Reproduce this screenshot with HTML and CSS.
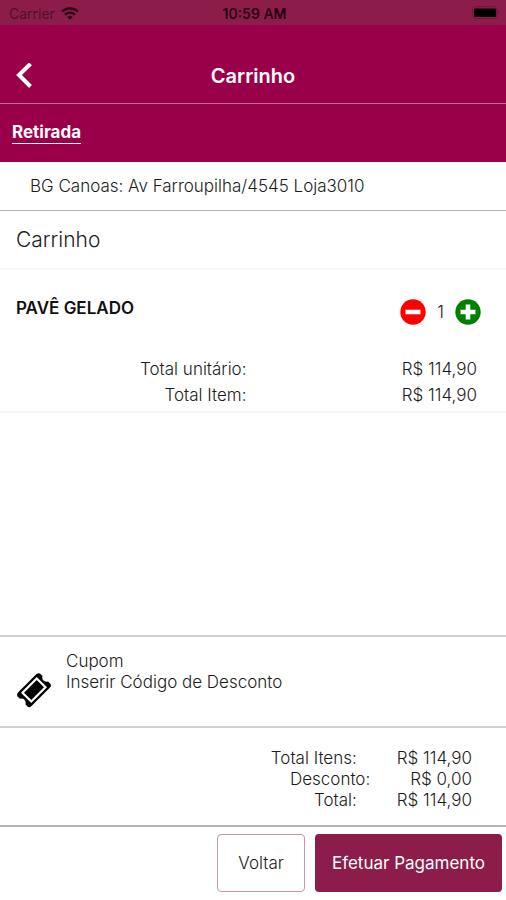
FILE: index.html
```html
<!DOCTYPE html>
<html lang="pt-BR">
<head>
  <meta charset="utf-8">
  <meta name="viewport" content="width=device-width, initial-scale=1">
  <title>Carrinho</title>
  <link rel="stylesheet" href="styles.css">
</head>
<body>
  <div class="status">
    <div class="carrier">
      <span>Carrier</span>
      <svg class="wifi" viewBox="0 0 18 13" aria-hidden="true">
        <g fill="none" stroke="currentColor" stroke-width="2.2">
          <path d="M1 4.6a11.4 11.4 0 0 1 16 0"/>
          <path d="M4 7.7a7.2 7.2 0 0 1 10 0"/>
        </g>
        <path fill="currentColor" d="M9 12.8 6.3 10a3.8 3.8 0 0 1 5.4 0z"/>
      </svg>
    </div>
    <span class="clock">10:59 AM</span>
    <svg class="battery" viewBox="0 0 28 14" aria-hidden="true">
      <rect x=".7" y=".7" width="24" height="12" rx="3" fill="none" stroke="#6d1639" stroke-width="1"/>
      <rect x="2" y="2.5" width="22" height="8.5" rx="1" fill="#000"/>
      <path d="M26 4.500q2 2.200 0 4.400z" fill="#6d1639"/>
    </svg>
  </div>

  <header class="header">
    <button class="back" type="button" aria-label="Voltar à tela anterior">
      <svg viewBox="0 0 16 26" aria-hidden="true"><path d="M14.500 .8 3 12l11.500 11.500" fill="none" stroke="#fff" stroke-width="4"/></svg>
    </button>
    <h1>Carrinho</h1>
  </header>

  <nav class="tabs"><a href="#retirada">Retirada</a></nav>

  <p class="address" id="retirada">BG Canoas: Av Farroupilha/4545 Loja3010</p>

  <main class="cart">
    <h2>Carrinho</h2>
    <article class="item">
      <div class="item-head">
        <h3>PAVÊ GELADO</h3>
        <div class="quantity">
          <button type="button" aria-label="Diminuir">
            <svg viewBox="0 0 26 26" aria-hidden="true"><circle cx="13" cy="13" r="12.7" fill="#fe0000"/><path d="M5.500 13h15" stroke="#fff" stroke-width="4.6"/></svg>
          </button>
          <span>1</span>
          <button type="button" aria-label="Aumentar">
            <svg viewBox="0 0 26 26" aria-hidden="true"><circle cx="13" cy="13" r="12.7" fill="#008000"/><path d="M5.500 13h15M13 5.500v15" stroke="#fff" stroke-width="4.6"/></svg>
          </button>
        </div>
      </div>
      <dl class="prices">
        <dt>Total unitário:</dt><dd>R$ 114,90</dd>
        <dt>Total Item:</dt><dd>R$ 114,90</dd>
      </dl>
    </article>
  </main>

  <a class="coupon" href="#cupom">
    <svg viewBox="0 0 36 36" aria-hidden="true">
      <path d="M20.500 2Q22.500 .3 24.500 2L26.500 4Q25.800 7 27.500 8.600 29.200 10.300 32 9.500L34.200 11.500Q35.800 13.500 34 15.500L15.500 34Q13.500 36.200 11.500 34.500L9.500 32.500Q10.200 29.500 8.500 27.700 6.700 26 4 26.800L1.800 24.800Q.2 22.500 2 20.500Z" fill="#000"/>
      <path d="M20.700 6.500 29.500 15.300 15.300 29.500 6.500 20.700Z" fill="#000" stroke="#fff" stroke-width="2.2"/>
    </svg>
    <span class="coupon-text"><span>Cupom</span><span>Inserir Código de Desconto</span></span>
  </a>

  <dl class="totals">
    <div><dt>Total Itens:</dt><dd>R$ 114,90</dd></div>
    <div><dt>Desconto:</dt><dd>R$ 0,00</dd></div>
    <div><dt>Total:</dt><dd>R$ 114,90</dd></div>
  </dl>

  <footer class="actions">
    <button class="secondary" type="button">Voltar</button>
    <button class="primary" type="button">Efetuar Pagamento</button>
  </footer>
</body>
</html>
```
FILE: styles.css
```css
* {
  box-sizing: border-box;
}

body {
  display: flex;
  flex-direction: column;
  min-height: 100vh;
  margin: 0;
  background: #fff;
  color: #1c1c1c;
  font: 300 17px/21px Inter, "Liberation Sans", sans-serif;
}

h1, h2, h3, p, dl, dd {
  margin: 0;
}

button {
  padding: 0;
  border: 0;
  background: none;
  color: inherit;
  font: inherit;
}

svg {
  display: block;
}

.status {
  display: grid;
  grid-template-columns: 1fr auto 1fr;
  align-items: center;
  height: 25px;
  padding: 1px 6px 0 9px;
  background: #8c1d4b;
  color: #26000f;
  font-size: 14px;
  font-weight: 400;
}

.carrier {
  display: flex;
  align-items: center;
  gap: 6px;
  color: #4e1029;
}

.wifi {
  width: 18px;
  height: 13px;
  color: #26000f;
}

.clock {
  font-weight: 600;
}

.battery {
  width: 28px;
  height: 14px;
  justify-self: end;
}

.header {
  display: grid;
  grid-template-columns: 1fr auto 1fr;
  align-items: center;
  padding: 36px 16px 12px;
  border-bottom: 1px solid #c46c92;
  background: #9a0049;
  color: #fff;
}

.back {
  width: 16px;
}

.back svg {
  width: 16px;
  height: 26px;
}

h1 {
  font-size: 20px;
  font-weight: 600;
  line-height: 30px;
}

.tabs {
  display: flex;
  padding: 18px 12px;
  background: #9a0049;
}

.tabs a {
  border-bottom: 1px solid #fff;
  color: #fff;
  font-weight: 700;
  text-decoration: none;
}

.address {
  padding: 14px 30px 13px;
  border-bottom: 1px solid #c3aab4;
}

.cart {
  flex: 1;
}

h2 {
  padding: 17px 16px 16px;
  border-bottom: 2px solid #f6f6f6;
  font-size: 21px;
  font-weight: 300;
  line-height: 24px;
}

.item {
  padding: 28px 25px 3px 16px;
  border-bottom: 2px solid #f4f4f4;
}

.item-head {
  display: flex;
  justify-content: space-between;
}

h3 {
  color: #111;
  font-size: 17px;
  font-weight: 600;
}

.quantity {
  display: flex;
  align-items: center;
  gap: 11px;
  padding-top: 1px;
}

.quantity svg {
  width: 26px;
  height: 26px;
}

.prices {
  display: grid;
  grid-template-columns: 1fr 1fr;
  padding: 31px 4px 0 0;
  line-height: 26px;
  text-align: right;
}

.coupon {
  display: flex;
  gap: 14px;
  padding: 14px 16px 33px;
  border-top: 2px solid #d0d0d0;
  color: inherit;
  text-decoration: none;
}

.coupon svg {
  width: 36px;
  height: 36px;
  margin: 21px 0 -15px;
}

.coupon-text {
  display: flex;
  flex-direction: column;
}

.totals {
  padding: 20px 34px 14px;
  border-top: 2px solid #d0d0d0;
}

.totals div {
  display: flex;
  justify-content: flex-end;
  gap: 40px;
}

.actions {
  display: flex;
  justify-content: flex-end;
  gap: 10px;
  padding: 7px 4px 8px;
  border-top: 2px solid #b5b5b5;
}

.actions button {
  height: 58px;
  border-radius: 4px;
}

.actions .secondary {
  padding: 0 20px;
  border: 1px solid #c896ab;
}

.actions .primary {
  padding: 0 17px;
  background: #8c1d4b;
  color: #fff;
  font-weight: 400;
}
```
